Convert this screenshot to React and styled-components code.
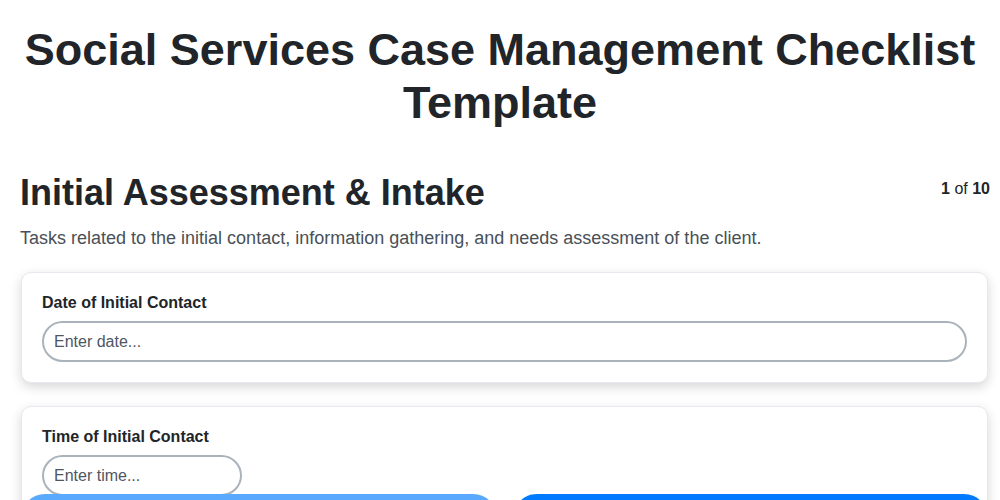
import React from "react";
import styled, { createGlobalStyle } from "styled-components";

const GlobalStyle = createGlobalStyle`
  * { box-sizing: border-box; }
  html, body {
    margin: 0;
    padding: 0;
    background: #ffffff;
    font-family: "Liberation Sans", Arial, sans-serif;
    color: #212529;
    overflow: hidden;
  }
`;

const Page = styled.div`
  padding: 23px 10px 0 20px;
`;

const Title = styled.h1`
  margin: 0 0 43px -10px;
  font-size: 45px;
  line-height: 53px;
  font-weight: 700;
  text-align: center;
  color: #212529;
`;

const SectionHead = styled.div`
  display: flex;
  justify-content: space-between;
  align-items: flex-start;
`;

const SectionTitle = styled.h2`
  margin: 0;
  font-size: 36px;
  line-height: 42px;
  font-weight: 700;
  color: #212529;
`;

const Counter = styled.div`
  font-size: 16px;
  line-height: 20px;
  padding-top: 7px;
  color: #212529;
  b { font-weight: 700; }
`;

const Description = styled.p`
  margin: 13px 0 23px;
  font-size: 18px;
  line-height: 22px;
  color: #495057;
`;

const Card = styled.div`
  margin: 0 2px 23px 1px;
  padding: 20px;
  background: #fff;
  border: 1px solid #e8e8ee;
  border-radius: 10px;
  box-shadow: 0 4px 12px rgba(0, 0, 0, 0.16);
`;

const Label = styled.label`
  display: block;
  margin-bottom: 9px;
  font-size: 16px;
  line-height: 19px;
  font-weight: 700;
  color: #212529;
`;

const Input = styled.input`
  display: block;
  width: ${(p) => p.$width || "100%"};
  height: 41px;
  padding: 0 10px;
  border: 2px solid #aab2bb;
  border-radius: 22px;
  font-family: inherit;
  font-size: 16px;
  color: #212529;
  background: #fff;
  outline: none;
  &::placeholder { color: #4f5663; }
`;

const NavBar = styled.div`
  position: fixed;
  left: 21px;
  right: 12px;
  top: 494px;
  display: grid;
  grid-template-columns: 1fr 1fr;
  gap: 16px;
`;

const NavButton = styled.button`
  height: 64px;
  padding: 34px 20px 0;
  border: none;
  border-radius: 24px;
  background: ${(p) => (p.$disabled ? "#59a9ff" : "#007bff")};
  color: #fff;
  font-family: inherit;
  font-size: 16px;
  font-weight: 700;
`;

export default function App() {
  return (
    <>
      <GlobalStyle />
      <Page>
        <Title>Social Services Case Management Checklist Template</Title>
        <SectionHead>
          <SectionTitle>Initial Assessment &amp; Intake</SectionTitle>
          <Counter>
            <b>1</b> of <b>10</b>
          </Counter>
        </SectionHead>
        <Description>
          Tasks related to the initial contact, information gathering, and needs
          assessment of the client.
        </Description>
        <Card>
          <Label>Date of Initial Contact</Label>
          <Input placeholder="Enter date..." />
        </Card>
        <Card>
          <Label>Time of Initial Contact</Label>
          <Input placeholder="Enter time..." $width="200px" />
        </Card>
      </Page>
      <NavBar>
        <NavButton $disabled>Previous</NavButton>
        <NavButton>Next</NavButton>
      </NavBar>
    </>
  );
}
